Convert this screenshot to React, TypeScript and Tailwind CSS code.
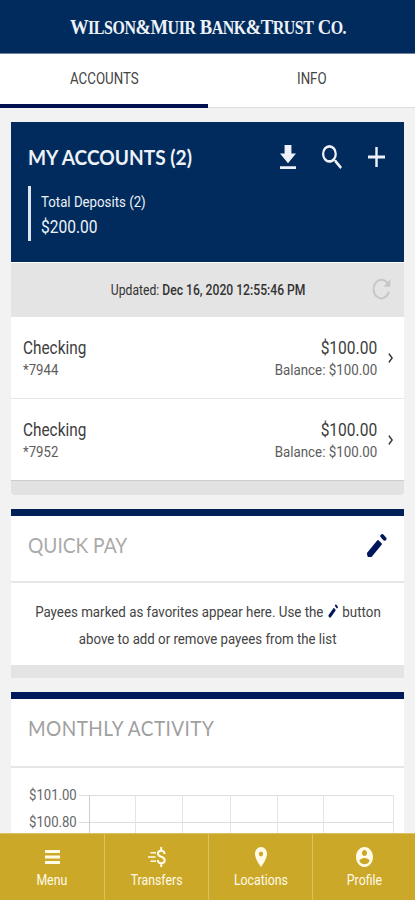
import type { ReactNode } from 'react';
import { clsx } from 'clsx';

interface IconProps {
  viewBox: string;
  d: string;
  className: string;
}

function Icon({ viewBox, d, className }: IconProps) {
  return (
    <svg
      viewBox={viewBox}
      preserveAspectRatio="none"
      fill="currentColor"
      className={clsx('shrink-0', className)}
    >
      <path d={d} />
    </svg>
  );
}

const icons = {
  download: 'M19 9h-4V3H9v6H5l7 7 7-7zM5 18v2h14v-2H5z',
  search:
    'M15.5 14h-.79l-.28-.27A6.471 6.471 0 0 0 16 9.5 6.5 6.5 0 1 0 9.5 16c1.61 0 3.09-.59 4.23-1.57l.27.28v.79l5 4.99L20.49 19l-4.99-5zm-6 0C7.01 14 5 11.99 5 9.5S7.01 5 9.5 5 14 7.01 14 9.5 11.99 14 9.5 14z',
  plus: 'M19 13h-6v6h-2v-6H5v-2h6V5h2v6h6v2z',
  menu: 'M3 18h18v-2.5H3V18zm0-4.8h18v-2.4H3v2.4zM3 6v2.5h18V6H3z',
  pin: 'M12 2C8.13 2 5 5.13 5 9c0 5.25 7 13 7 13s7-7.75 7-13c0-3.87-3.13-7-7-7zm0 9.5a2.5 2.5 0 0 1 0-5 2.5 2.5 0 0 1 0 5z',
  chevron: 'M10 6 8.59 7.41 13.17 12l-4.58 4.59L10 18l6-6z',
  profile:
    'M12 2C6.48 2 2 6.48 2 12s4.48 10 10 10 10-4.48 10-10S17.52 2 12 2zm0 3c1.66 0 3 1.34 3 3s-1.34 3-3 3-3-1.34-3-3 1.34-3 3-3zm0 14.2a7.2 7.2 0 0 1-6-3.22c.03-1.99 4-3.08 6-3.08 1.99 0 5.97 1.09 6 3.08a7.2 7.2 0 0 1-6 3.22z',
};

function PencilIcon({ className }: { className: string }) {
  return (
    <svg viewBox="0 0 21 25" fill="none" stroke="currentColor" className={clsx('shrink-0', className)}>
      <path
        d="M2 20.4 12 8.2 14.8 11 4.9 23H2.6z"
        fill="currentColor"
        strokeWidth="2.2"
        strokeLinejoin="round"
      />
      <path d="M16.2 3 18.6 5.8" strokeWidth="3.8" strokeLinecap="round" />
    </svg>
  );
}

function RefreshIcon() {
  return (
    <svg width="19" height="22" viewBox="0 0 19 22" fill="none" className="shrink-0">
      <path
        d="M15.8 5.8A7.8 9.3 0 1 0 16.6 14.6"
        stroke="#c6c6c6"
        strokeWidth="1.9"
        strokeLinecap="round"
      />
      <path d="M18.3 1.2V8.8H11.6z" fill="#c6c6c6" />
    </svg>
  );
}

function TransferIcon() {
  return (
    <svg width="18" height="20" viewBox="0 0 18 20" fill="none" stroke="currentColor" className="shrink-0">
      <path d="M2.5 5.8H8M0 10H7.5M2.5 14.2H8" strokeWidth="1.6" />
      <path
        d="M16.6 7C16.4 4.8 15.2 3.8 13.2 3.8 11.2 3.8 9.9 4.9 9.9 6.6 9.9 8.5 11.4 9.2 13.2 9.8 15.2 10.4 16.7 11.2 16.7 13.2 16.7 15.1 15.3 16.2 13.2 16.2 11 16.2 9.8 15.1 9.7 13M13.2 0V3.8M13.2 16.2V20"
        strokeWidth="2"
      />
    </svg>
  );
}

const accounts = [
  { name: 'Checking', number: '*7944', available: '$100.00', balance: 'Balance: $100.00' },
  { name: 'Checking', number: '*7952', available: '$100.00', balance: 'Balance: $100.00' },
];

function AccountRow({ account }: { account: (typeof accounts)[number] }) {
  return (
    <div className="flex h-[81px] items-start bg-white pt-[19px] pr-[11px] pl-[12px]">
      <div className="flex flex-1 flex-col">
        <span className="origin-left scale-x-[.83] text-[18.5px]/[25px] text-[#3d3d3d]">
          {account.name}
        </span>
        <span className="origin-left scale-x-[.85] text-[15.5px]/[19px] text-[#5c5c5c]">
          {account.number}
        </span>
      </div>
      <div className="flex flex-col text-right whitespace-nowrap">
        <span className="origin-right scale-x-[.84] text-[18.5px]/[25px] text-[#3d3d3d]">
          {account.available}
        </span>
        <span className="origin-right scale-x-[.86] text-[15.5px]/[19px] text-[#5c5c5c]">
          {account.balance}
        </span>
      </div>
      <Icon
        viewBox="8 6 8 12"
        d={icons.chevron}
        className="mt-[17px] ml-[11px] h-[10px] w-[5px] text-[#333]"
      />
    </div>
  );
}

function CardTitle({ children, className }: { children: ReactNode; className?: string }) {
  return (
    <h2
      className={clsx(
        "origin-left font-['Lato',sans-serif] text-[21.5px]/[28px] whitespace-nowrap",
        className,
      )}
    >
      {children}
    </h2>
  );
}

function NavItem({ label, children }: { label: string; children: ReactNode }) {
  return (
    <div className="flex flex-col items-center border-r border-[#dcc162] pt-[12px] last:border-r-0">
      <div className="flex h-[22px] items-center">{children}</div>
      <span className="mt-[2px] scale-x-[.82] text-[15px]/[20px]">{label}</span>
    </div>
  );
}

export default function App() {
  return (
    <div className="flex h-[900px] w-[415px] flex-col overflow-hidden bg-[#f2f2f2] font-['Roboto',sans-serif]">
      <header className="flex h-[54px] shrink-0 items-center justify-center border-b border-[#6d84a3] bg-[#002b5c] pt-[2px] pl-[2px]">
        <h1 className="scale-x-[.885] font-['Liberation_Serif',serif] text-[21px] font-bold tracking-[-0.5px] whitespace-nowrap text-[#eef2f8]">
          W<span className="text-[18px]">ILSON</span>&amp;M
          <span className="text-[18px]">UIR</span> B<span className="text-[18px]">ANK</span>
          &amp;T<span className="text-[18px]">RUST</span> C
          <span className="text-[18px]">O.</span>
        </h1>
      </header>
      <nav className="flex h-[54px] shrink-0 bg-white text-[16px] text-[#444]">
        <div className="flex w-[208px] items-center justify-center border-b-4 border-[#000f50]">
          <span className="scale-x-[.83]">ACCOUNTS</span>
        </div>
        <div className="flex flex-1 items-center justify-center border-b border-[#ddd] pb-[3px]">
          <span className="scale-x-[.83]">INFO</span>
        </div>
      </nav>

      <main className="flex min-h-0 flex-1 flex-col overflow-hidden pt-[14px] pr-[11px] pl-[11px]">
        <section className="flex shrink-0 flex-col">
          <div className="h-[140px] bg-[#002b5c] pr-[19px] pl-[17px] text-[#eef2f8]">
            <div className="flex items-center pt-[21px]">
              <CardTitle className="flex-1 scale-x-[.89] font-bold">MY ACCOUNTS (2)</CardTitle>
              <Icon viewBox="5 3 14 17" d={icons.download} className="h-[24px] w-[16px]" />
              <Icon
                viewBox="3 3 17.5 17.5"
                d={icons.search}
                className="ml-[26px] h-[24px] w-[20px]"
              />
              <Icon viewBox="5 5 14 14" d={icons.plus} className="ml-[26px] h-[20px] w-[17px]" />
            </div>
            <div className="mt-[15px] flex h-[55px] flex-col border-l-[3px] border-[#dfe5ee] pt-[5px] pl-[10px]">
              <span className="origin-left scale-x-[.855] text-[15.5px]/[22px]">
                Total Deposits (2)
              </span>
              <span className="origin-left scale-x-[.84] text-[18.5px]/[29px]">$200.00</span>
            </div>
          </div>
          <div className="flex h-[55px] items-center border-t border-white bg-[#e4e4e4] pr-[13px] pl-[13px] text-[15px] text-[#333]">
            <div className="flex flex-1 justify-center pl-[20px] whitespace-nowrap">
              <span className="scale-x-[.81]">
                Updated: <span className="font-medium">Dec 16, 2020 12:55:46 PM</span>
              </span>
            </div>
            <div className="pb-[3px]">
              <RefreshIcon />
            </div>
          </div>
          <div className="flex flex-col gap-px bg-[#e6e6e6]">
            {accounts.map((account) => (
              <AccountRow key={account.number} account={account} />
            ))}
          </div>
          <div className="h-[15px] rounded-b border-t border-[#ccc] bg-[#e2e2e2]" />
        </section>

        <section className="mt-[14px] flex shrink-0 flex-col">
          <div className="flex h-[74px] items-start border-t-[7px] border-b-2 border-t-[#002058] border-b-[#e6e6e6] bg-white pr-[17px] pl-[17px]">
            <CardTitle className="mt-[15px] flex-1 scale-x-[.89] text-[#aaa]">QUICK PAY</CardTitle>
            <PencilIcon className="mt-[17px] h-[25px] w-[21px] text-[#00175c]" />
          </div>
          <div className="flex h-[82px] flex-col items-center bg-white pt-[16px] text-[15.5px]/[27px] whitespace-nowrap text-[#444]">
            <p className="flex scale-x-[.86] items-center">
              Payees marked as favorites appear here. Use the
              <PencilIcon className="mr-[4px] mb-[4px] ml-[5px] h-[14px] w-[13px] text-[#00175c]" />
              button
            </p>
            <p className="scale-x-[.855]">above to add or remove payees from the list</p>
          </div>
          <div className="h-[13px] bg-[#e4e4e4]" />
        </section>

        <section className="mt-[14px] flex shrink-0 flex-col">
          <div className="h-[76px] border-t-[7px] border-b-2 border-t-[#00195a] border-b-[#e6e6e6] bg-white pl-[17px]">
            <CardTitle className="mt-[15px] scale-x-[.883] tracking-[0.5px] text-[#a0a0a0]">
              MONTHLY ACTIVITY
            </CardTitle>
          </div>
          <div className="flex h-[130px] bg-white pt-[14px] pr-[10px] pl-[18px] text-[15px]/[27px] text-[#666]">
            <div className="flex w-[50px] flex-col">
              <span className="origin-left scale-x-[.875]">$101.00</span>
              <span className="origin-left scale-x-[.875]">$100.80</span>
            </div>
            <svg width="315" height="90" className="mt-[13px]" fill="none">
              <path d="M0 .5H315M0 27.5H315" stroke="#ddd" />
              <path d="M10.5 0V90" stroke="#ccc" />
              <path d="M56.5 0V90M103.5 0V90M151.5 0V90M198.5 0V90M244.5 0V90M314.5 0V90" stroke="#e4e4e4" />
            </svg>
          </div>
        </section>
      </main>

      <footer className="grid h-[67px] shrink-0 grid-cols-[105px_104px_104px_102px] border-t border-[#dcc162] bg-[#cca829] text-[#fffbe8]">
        <NavItem label="Menu">
          <Icon viewBox="3 6 18 12" d={icons.menu} className="h-[14px] w-[15px]" />
        </NavItem>
        <NavItem label="Transfers">
          <TransferIcon />
        </NavItem>
        <NavItem label="Locations">
          <Icon viewBox="5 2 14 20" d={icons.pin} className="h-[20px] w-[12px]" />
        </NavItem>
        <NavItem label="Profile">
          <Icon viewBox="2 2 20 20" d={icons.profile} className="h-[20px] w-[17px]" />
        </NavItem>
      </footer>
    </div>
  );
}
